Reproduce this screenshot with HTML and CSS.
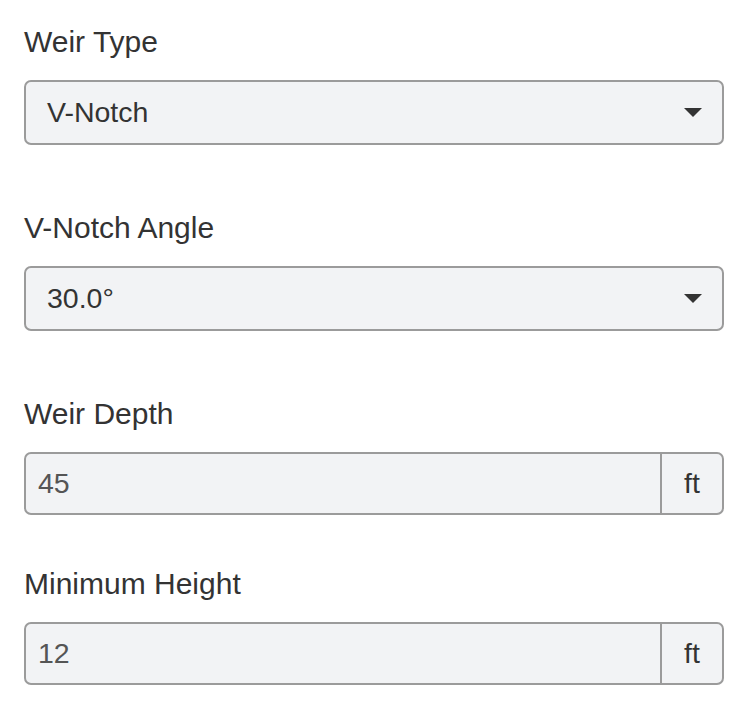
FILE: index.html
```html
<!DOCTYPE html>
<html>
<head>
<meta charset="utf-8">
<link rel="stylesheet" href="styles.css">
</head>
<body>
<form class="form">
  <div class="field field-select">
    <label class="label">Weir Type</label>
    <div class="select">
      <span class="select-value">V-Notch</span>
      <svg class="caret" width="18" height="9" viewBox="0 0 18 9"><path d="M0 0 H18 L9 9 Z" fill="#333"/></svg>
    </div>
  </div>
  <div class="field field-select">
    <label class="label">V-Notch Angle</label>
    <div class="select">
      <span class="select-value">30.0°</span>
      <svg class="caret" width="18" height="9" viewBox="0 0 18 9"><path d="M0 0 H18 L9 9 Z" fill="#333"/></svg>
    </div>
  </div>
  <div class="field field-input">
    <label class="label">Weir Depth</label>
    <div class="input-group">
      <span class="input">45</span>
      <span class="addon">ft</span>
    </div>
  </div>
  <div class="field field-input">
    <label class="label">Minimum Height</label>
    <div class="input-group">
      <span class="input">12</span>
      <span class="addon">ft</span>
    </div>
  </div>
</form>
</body>
</html>
```
FILE: styles.css
```css
* { box-sizing: border-box; }
html, body { margin: 0; background: #fff; }
body {
  font-family: "Liberation Sans", Arial, sans-serif;
  color: #333;
  font-size: 28px;
}
.form {
  padding: 22px 26px 0 24px;
  display: flex;
  flex-direction: column;
}
.label {
  display: block;
  font-size: 30px;
  line-height: 40px;
  margin-bottom: 18px;
}
.field-select { margin-bottom: 63px; }
.field-input { margin-bottom: 49px; }
.select {
  height: 65px;
  border: 2px solid #9b9b9b;
  border-radius: 7px;
  background: #f2f3f5;
  display: flex;
  align-items: center;
  justify-content: space-between;
  padding: 0 20px 0 21px;
  font-size: 28.5px;
}
.select-value { line-height: 1; }
.caret { display: block; }
.input-group {
  height: 63px;
  border: 2px solid #9b9b9b;
  border-radius: 7px;
  background: #f2f3f5;
  display: flex;
  align-items: stretch;
  font-size: 28.5px;
}
.input {
  flex: 1;
  display: flex;
  align-items: center;
  padding-left: 12px;
  color: #555;
}
.addon {
  width: 62px;
  border-left: 2px solid #9b9b9b;
  display: flex;
  align-items: center;
  justify-content: center;
  color: #333;
}
```
